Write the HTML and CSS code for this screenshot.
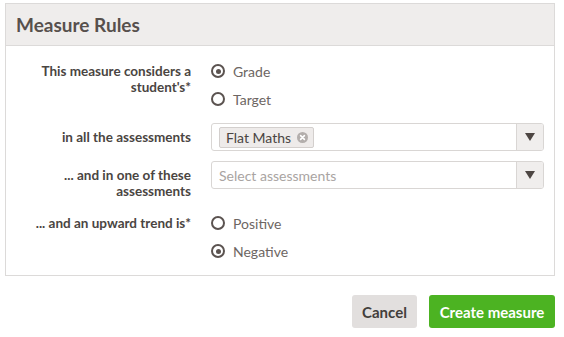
FILE: index.html
```html
<!DOCTYPE html>
<html>
<head>
<meta charset="utf-8">
<link rel="stylesheet" href="styles.css">
</head>
<body>
<div class="panel">
  <div class="panel-head"><h2 class="title">Measure Rules</h2></div>
  <div class="panel-body">
    <div class="row">
      <div class="label">This measure considers a student's*</div>
      <div class="radios">
        <div class="radio-item"><span class="radio checked"></span><span class="radio-text">Grade</span></div>
        <div class="radio-item"><span class="radio"></span><span class="radio-text">Target</span></div>
      </div>
    </div>
    <div class="row">
      <div class="label">in all the assessments</div>
      <div class="select">
        <div class="select-value">
          <span class="tag">Flat Maths<span class="tag-x"><svg width="11" height="11" viewBox="0 0 11 11"><circle cx="5.5" cy="5.5" r="5.5" fill="#b3aeac"/><path d="M3.6 3.6 L7.4 7.4 M7.4 3.6 L3.6 7.4" stroke="#fff" stroke-width="1.6" stroke-linecap="round"/></svg></span></span>
        </div>
        <div class="select-arrow"><span class="tri"></span></div>
      </div>
    </div>
    <div class="row">
      <div class="label">... and in one of these assessments</div>
      <div class="select">
        <div class="select-value"><span class="placeholder">Select assessments</span></div>
        <div class="select-arrow"><span class="tri"></span></div>
      </div>
    </div>
    <div class="row">
      <div class="label">... and an upward trend is*</div>
      <div class="radios">
        <div class="radio-item"><span class="radio"></span><span class="radio-text">Positive</span></div>
        <div class="radio-item"><span class="radio checked"></span><span class="radio-text">Negative</span></div>
      </div>
    </div>
  </div>
</div>
<div class="actions">
  <button class="btn btn-cancel">Cancel</button>
  <button class="btn btn-create">Create measure</button>
</div>
</body>
</html>
```

FILE: styles.css
```css
html, body {
  margin: 0;
  padding: 0;
  background: #fff;
}
body {
  font-family: "Lato", "Open Sans", sans-serif;
  padding: 3px 9px 0 5px;
  color: #4a4542;
}
.panel {
  border: 1px solid #dcdad9;
}
.panel-head {
  background: #efedec;
  border-bottom: 1px solid #dcdad9;
  height: 41px;
  display: flex;
  align-items: center;
  padding-left: 10px;
}
.title {
  margin: 0;
  font-size: 19px;
  font-weight: 700;
  color: #57504d;
}
.panel-body {
  padding: 11px 10px 10px 0;
  display: flex;
  flex-direction: column;
  gap: 10px;
}
.row {
  display: grid;
  grid-template-columns: 185px 1fr;
  column-gap: 20px;
}
.label {
  text-align: right;
  font-weight: 700;
  font-size: 13.5px;
  line-height: 16px;
  padding-top: 6px;
  color: #4a4542;
}
.radios {
  display: flex;
  flex-direction: column;
}
.radio-item {
  height: 28px;
  display: flex;
  align-items: center;
  gap: 8px;
}
.radio {
  box-sizing: border-box;
  width: 14px;
  height: 14px;
  border: 2px solid #5b5350;
  border-radius: 50%;
  display: flex;
  align-items: center;
  justify-content: center;
}
.radio.checked::after {
  content: "";
  width: 5px;
  height: 5px;
  border-radius: 50%;
  background: #5b5350;
}
.radio-text {
  font-size: 14px;
  color: #6d6663;
}
.select {
  box-sizing: border-box;
  height: 28px;
  border: 1px solid #d9d6d4;
  border-radius: 3px;
  display: flex;
}
.select-value {
  flex: 1;
  display: flex;
  align-items: center;
  padding-left: 7px;
}
.tag {
  box-sizing: border-box;
  height: 21px;
  display: inline-flex;
  align-items: center;
  gap: 6px;
  padding: 0 5px 0 6px;
  background: #eeebea;
  border: 1px solid #d3cfcd;
  border-radius: 2px;
  font-size: 14px;
  color: #4a4542;
}
.tag-x {
  display: flex;
}
.placeholder {
  font-size: 14px;
  color: #a9a4a2;
}
.select-arrow {
  width: 26px;
  background: #f0eeed;
  border-left: 1px solid #d9d6d4;
  display: flex;
  align-items: center;
  justify-content: center;
  border-radius: 0 2px 2px 0;
}
.tri {
  width: 0;
  height: 0;
  border-left: 5px solid transparent;
  border-right: 5px solid transparent;
  border-top: 8px solid #4d4643;
}
.actions {
  display: flex;
  justify-content: flex-end;
  gap: 12px;
  margin-top: 19px;
  padding-right: 0;
}
.btn {
  font-family: inherit;
  height: 33px;
  border: none;
  border-radius: 3px;
  font-size: 15px;
  font-weight: 700;
  padding: 0;
}
.btn-cancel {
  width: 65px;
  background: #e2dfde;
  color: #433e3b;
}
.btn-create {
  width: 126px;
  background: #4cb322;
  color: #fff;
}
```
